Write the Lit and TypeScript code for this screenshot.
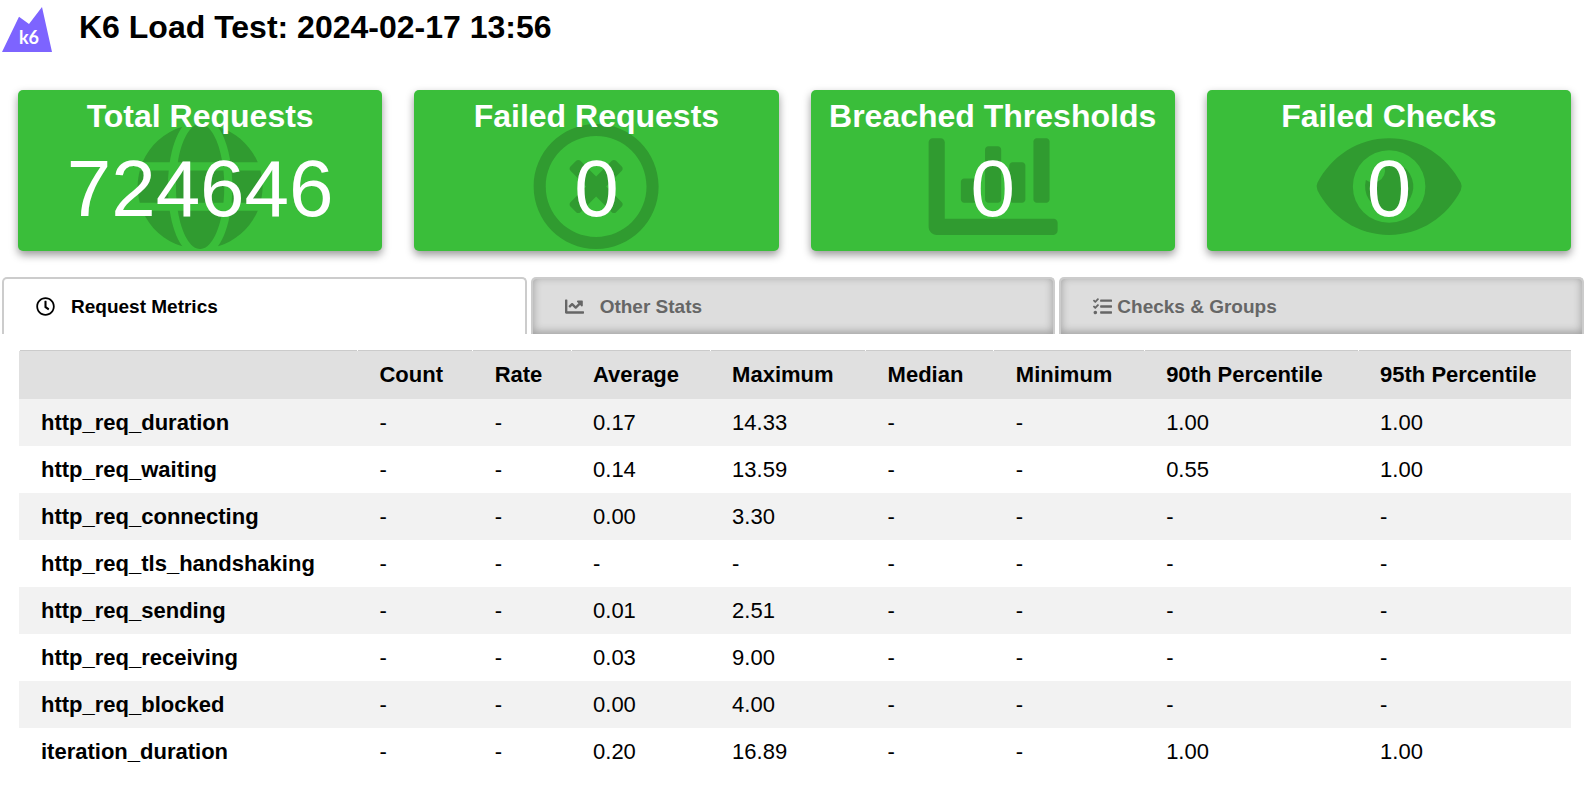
import { LitElement, html, css, svg } from "lit";
import { customElement, state } from "lit/decorators.js";
import { classMap } from "lit/directives/class-map.js";

interface Icon {
  width: number;
  path: string;
}

const ICONS: Record<string, Icon> = {
  globe: {
    width: 496,
    path: "M336.5 160C322 70.7 287.8 8 248 8s-74 62.7-88.5 152h177zM152 256c0 22.2 1.2 43.5 3.3 64h185.3c2.1-20.5 3.3-41.8 3.3-64s-1.2-43.5-3.3-64H155.3c-2.1 20.5-3.3 41.8-3.3 64zm324.7-96c-28.6-67.9-86.5-120.4-158-141.6 24.4 33.8 41.2 84.7 50 141.6h108zM177.2 18.4C105.8 39.6 47.8 92.1 19.3 160h108c8.7-56.9 25.5-107.8 49.9-141.6zM487.4 192H372.7c2.1 21 3.3 42.5 3.3 64s-1.2 43-3.3 64h114.6c5.5-20.5 8.6-41.8 8.6-64s-3.1-43.5-8.5-64zM120 256c0-21.5 1.2-43 3.3-64H8.6C3.2 212.5 0 233.8 0 256s3.2 43.5 8.6 64h114.6c-2-21-3.2-42.5-3.2-64zm39.5 96c14.5 89.3 48.7 152 88.5 152s74-62.7 88.5-152h-177zm159.3 141.6c71.4-21.2 129.4-73.7 158-141.6h-108c-8.8 56.9-25.6 107.8-50 141.6zM19.3 352c28.6 67.9 86.5 120.4 158 141.6-24.4-33.8-41.2-84.7-50-141.6h-108z",
  },
  timesCircle: {
    width: 512,
    path: "M256 8C119 8 8 119 8 256s111 248 248 248 248-111 248-248S393 8 256 8zm0 448c-110.5 0-200-89.5-200-200S145.5 56 256 56s200 89.5 200 200-89.5 200-200 200zm101.8-262.2L295.6 256l62.2 62.2c4.7 4.7 4.7 12.3 0 17l-22.6 22.6c-4.7 4.7-12.3 4.7-17 0L256 295.6l-62.2 62.2c-4.7 4.7-12.3 4.7-17 0l-22.6-22.6c-4.7-4.7-4.7-12.3 0-17l62.2-62.2-62.2-62.2c-4.7-4.7-4.7-12.3 0-17l22.6-22.6c4.7-4.7 12.3-4.7 17 0l62.2 62.2 62.2-62.2c4.7-4.7 12.3-4.7 17 0l22.6 22.6c4.7 4.7 4.7 12.3 0 17z",
  },
  chartBar: {
    width: 512,
    path: "M332.8 320h38.4c6.4 0 12.8-6.4 12.8-12.8V172.8c0-6.4-6.4-12.8-12.8-12.8h-38.4c-6.4 0-12.8 6.4-12.8 12.8v134.4c0 6.4 6.4 12.8 12.8 12.8zm96 0h38.4c6.4 0 12.8-6.4 12.8-12.8V76.8c0-6.4-6.4-12.8-12.8-12.8h-38.4c-6.4 0-12.8 6.4-12.8 12.8v230.4c0 6.4 6.4 12.8 12.8 12.8zm-288 0h38.4c6.4 0 12.8-6.4 12.8-12.8v-70.4c0-6.4-6.4-12.8-12.8-12.8h-38.4c-6.4 0-12.8 6.4-12.8 12.8v70.4c0 6.4 6.4 12.8 12.8 12.8zm96 0h38.4c6.4 0 12.8-6.4 12.8-12.8V108.8c0-6.4-6.4-12.8-12.8-12.8h-38.4c-6.4 0-12.8 6.4-12.8 12.8v198.4c0 6.4 6.4 12.8 12.8 12.8zM496 384H64V80c0-8.84-7.16-16-16-16H16C7.16 64 0 71.16 0 80v336c0 17.67 14.33 32 32 32h464c8.84 0 16-7.16 16-16v-32c0-8.84-7.16-16-16-16z",
  },
  eye: {
    width: 576,
    path: "M572.52 241.4C518.29 135.59 410.93 64 288 64S57.68 135.64 3.48 241.41a32.35 32.35 0 0 0 0 29.19C57.71 376.41 165.07 448 288 448s230.32-71.64 284.52-177.41a32.35 32.35 0 0 0 0-29.19zM288 400a144 144 0 1 1 144-144 143.93 143.93 0 0 1-144 144zm0-240a95.31 95.31 0 0 0-25.31 3.79 47.85 47.85 0 0 1-66.9 66.9A95.78 95.78 0 1 0 288 160z",
  },
  clock: {
    width: 512,
    path: "M256 8C119 8 8 119 8 256s111 248 248 248 248-111 248-248S393 8 256 8zm0 448c-110.5 0-200-89.5-200-200S145.5 56 256 56s200 89.5 200 200-89.5 200-200 200zm61.8-104.4l-84.9-61.7c-3.1-2.3-4.9-5.9-4.9-9.7V116c0-6.6 5.4-12 12-12h32c6.6 0 12 5.4 12 12v141.7l66.8 48.6c5.4 3.9 6.5 11.4 2.6 16.8L334.6 349c-3.9 5.3-11.4 6.5-16.8 2.6z",
  },
  chartLine: {
    width: 512,
    path: "M496 384H64V80c0-8.84-7.16-16-16-16H16C7.16 64 0 71.16 0 80v336c0 17.67 14.33 32 32 32h464c8.84 0 16-7.16 16-16v-32c0-8.84-7.16-16-16-16zM464 96H345.94c-21.38 0-32.09 25.85-16.97 40.97l32.4 32.4L288 242.75l-73.37-73.37c-12.5-12.5-32.76-12.5-45.25 0l-68.69 68.69c-6.25 6.25-6.25 16.38 0 22.63l22.62 22.62c6.25 6.25 16.38 6.25 22.63 0L192 237.25l73.37 73.37c12.5 12.5 32.76 12.5 45.25 0l96-96 32.4 32.4c15.12 15.12 40.97 4.41 40.97-16.97V112c.01-8.84-7.15-16-15.99-16z",
  },
  tasks: {
    width: 512,
    path: "M139.61 35.5a12 12 0 0 0-17 0L58.93 98.81l-22.7-22.12a12 12 0 0 0-17 0L3.53 92.41a12 12 0 0 0 0 17l47.59 47.4a12.78 12.78 0 0 0 17.61 0l15.59-15.62L156.52 69a12.09 12.09 0 0 0 .09-17zm0 159.19a12 12 0 0 0-17 0l-63.68 63.72-22.7-22.1a12 12 0 0 0-17 0L3.53 252a12 12 0 0 0 0 17L51 316.5a12.77 12.77 0 0 0 17.6 0l15.7-15.69 72.2-72.22a12 12 0 0 0 .09-16.9zM64 368c-26.49 0-48.59 21.5-48.59 48S37.53 464 64 464a48 48 0 0 0 0-96zm432 16H208a16 16 0 0 0-16 16v32a16 16 0 0 0 16 16h288a16 16 0 0 0 16-16v-32a16 16 0 0 0-16-16zm0-320H208a16 16 0 0 0-16 16v32a16 16 0 0 0 16 16h288a16 16 0 0 0 16-16V80a16 16 0 0 0-16-16zm0 160H208a16 16 0 0 0-16 16v32a16 16 0 0 0 16 16h288a16 16 0 0 0 16-16v-32a16 16 0 0 0-16-16z",
  },
};

const icon = (name: string, className: string) => html`
  <svg class=${className} viewBox="0 0 ${ICONS[name].width} 512" aria-hidden="true">
    ${svg`<path d=${ICONS[name].path} fill="currentColor"></path>`}
  </svg>
`;

const CARDS = [
  { title: "Total Requests", value: "724646", icon: "globe" },
  { title: "Failed Requests", value: "0", icon: "timesCircle" },
  { title: "Breached Thresholds", value: "0", icon: "chartBar" },
  { title: "Failed Checks", value: "0", icon: "eye" },
];

const TABS = [
  { label: "Request Metrics", icon: "clock", tight: false },
  { label: "Other Stats", icon: "chartLine", tight: false },
  { label: "Checks & Groups", icon: "tasks", tight: true },
];

const COLUMNS = ["Count", "Rate", "Average", "Maximum", "Median", "Minimum", "90th Percentile", "95th Percentile"];

const ROWS: [string, string[]][] = [
  ["http_req_duration", ["-", "-", "0.17", "14.33", "-", "-", "1.00", "1.00"]],
  ["http_req_waiting", ["-", "-", "0.14", "13.59", "-", "-", "0.55", "1.00"]],
  ["http_req_connecting", ["-", "-", "0.00", "3.30", "-", "-", "-", "-"]],
  ["http_req_tls_handshaking", ["-", "-", "-", "-", "-", "-", "-", "-"]],
  ["http_req_sending", ["-", "-", "0.01", "2.51", "-", "-", "-", "-"]],
  ["http_req_receiving", ["-", "-", "0.03", "9.00", "-", "-", "-", "-"]],
  ["http_req_blocked", ["-", "-", "0.00", "4.00", "-", "-", "-", "-"]],
  ["iteration_duration", ["-", "-", "0.20", "16.89", "-", "-", "1.00", "1.00"]],
];

@customElement("app-root")
export class AppRoot extends LitElement {
  @state() private selected = 0;

  static styles = css`
    :host {
      display: block;
      font-family: "Liberation Sans", Arial, Helvetica, sans-serif;
      color: #000;
      background: #fff;
    }
    .header {
      display: flex;
      align-items: flex-start;
      gap: 27px;
      padding: 7px 2px 0;
    }
    .logo {
      width: 50px;
      height: 45px;
      flex: none;
    }
    .logo-text {
      font: 700 18px "Lato", sans-serif;
      fill: #fff;
    }
    .title {
      margin: 0;
      padding-top: 1px;
      font-size: 32px;
      line-height: 38px;
      font-weight: 700;
    }
    .cards {
      display: grid;
      grid-template-columns: repeat(4, 1fr);
      gap: 32px;
      padding: 38px 14px 26px 18px;
    }
    .card {
      position: relative;
      display: flex;
      flex-direction: column;
      align-items: center;
      gap: 8px;
      padding: 8px 0 16px;
      border-radius: 5px;
      background: #3abe3a;
      color: #fff;
      box-shadow: 0 4px 8px rgba(0, 0, 0, 0.4);
    }
    .card-icon {
      position: absolute;
      bottom: 0;
      left: 0;
      width: 100%;
      height: 129px;
      color: #309b30;
    }
    .card-title {
      position: relative;
      margin: 0;
      font-size: 32px;
      line-height: 37px;
      font-weight: 700;
      white-space: nowrap;
    }
    .card-value {
      position: relative;
      font-size: 80px;
      line-height: 92px;
    }
    .tabs {
      display: grid;
      grid-template-columns: repeat(3, 1fr);
      gap: 4px;
      padding: 0 1px 0 2px;
    }
    .tab {
      display: flex;
      align-items: center;
      gap: 16px;
      height: 57px;
      padding: 0 32px;
      border: 2px solid #ccc;
      border-bottom: 0;
      border-radius: 5px 5px 0 0;
      background: #ddd;
      color: #666;
      font: inherit;
      font-size: 19px;
      font-weight: 700;
      box-shadow: inset 0 -2px 8px rgba(0, 0, 0, 0.3);
      cursor: pointer;
    }
    .tab.tight {
      gap: 5px;
    }
    .tab.active {
      background: #fff;
      color: #000;
      box-shadow: none;
    }
    .tab-icon {
      width: 19px;
      height: 19px;
      flex: none;
    }
    .panel {
      padding: 16px 14px 20px 19px;
    }
    .metrics {
      width: 100%;
      border-collapse: collapse;
      font-size: 22px;
      line-height: 25px;
      text-align: left;
    }
    .metrics th,
    .metrics td {
      padding: 11px 22px;
      border-left: 1px solid transparent;
    }
    .metrics .first {
      border-left: 0;
    }
    .metrics .head-cell {
      padding: 12px 22px;
      background:
        linear-gradient(#fff, #fff) 0 0 / 1px 1px no-repeat border-box,
        linear-gradient(#cbcbcb, #cbcbcb) 0 0 / 100% 1px no-repeat border-box,
        #e0e0e0;
    }
    .row:nth-child(odd) {
      background: #f2f2f2;
    }
  `;

  render() {
    return html`
      <header class="header">
        <svg class="logo" viewBox="0 0 50 45" role="img" aria-label="k6">
          <path d="M0 45L17 9.7L27 17L40 0L50 45Z" fill="#7d64ff"></path>
          <text class="logo-text" x="17" y="37">k6</text>
        </svg>
        <h1 class="title">K6 Load Test: 2024-02-17 13:56</h1>
      </header>
      <main>
        <section class="cards">
          ${CARDS.map(
            (c) => html`
              <article class="card">
                ${icon(c.icon, "card-icon")}
                <h2 class="card-title">${c.title}</h2>
                <div class="card-value">${c.value}</div>
              </article>
            `
          )}
        </section>
        <div class="tabs" role="tablist">
          ${TABS.map(
            (t, i) => html`
              <button
                type="button"
                role="tab"
                aria-selected=${i === this.selected}
                class=${classMap({ tab: true, tight: t.tight, active: i === this.selected })}
                @click=${() => (this.selected = i)}
              >
                ${icon(t.icon, "tab-icon")}<span>${t.label}</span>
              </button>
            `
          )}
        </div>
        <div class="panel" role="tabpanel">
          <table class="metrics">
            <thead>
              <tr>
                <th class="head-cell first"></th>
                ${COLUMNS.map((c) => html`<th class="head-cell" scope="col">${c}</th>`)}
              </tr>
            </thead>
            <tbody>
              ${ROWS.map(
                ([name, values]) => html`
                  <tr class="row">
                    <th class="first" scope="row">${name}</th>
                    ${values.map((v) => html`<td>${v}</td>`)}
                  </tr>
                `
              )}
            </tbody>
          </table>
        </div>
      </main>
    `;
  }
}
